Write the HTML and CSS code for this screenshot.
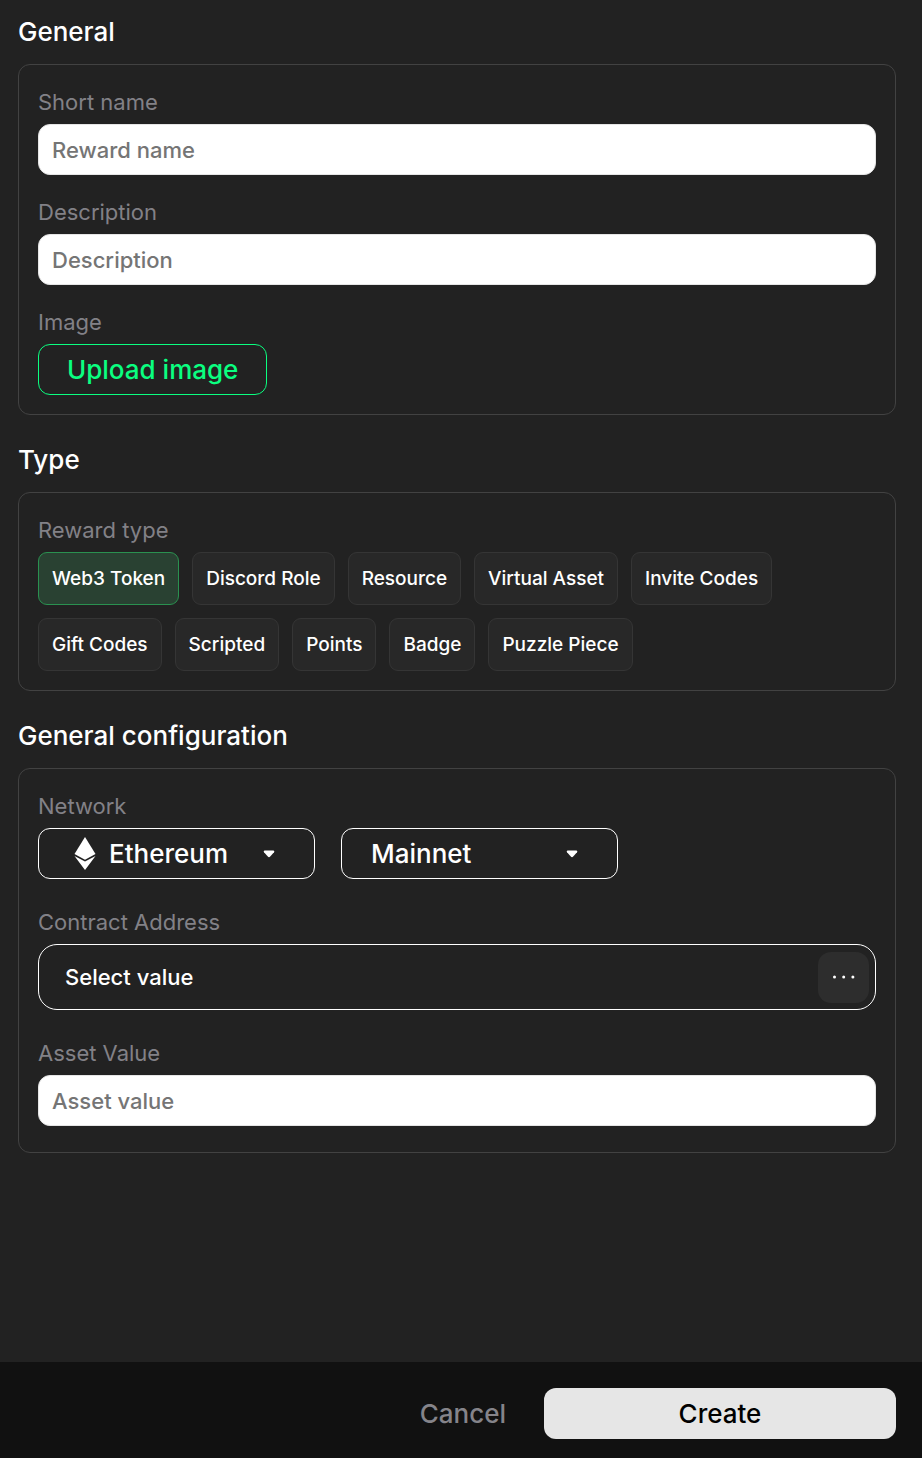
FILE: index.html
```html
<!DOCTYPE html>
<html lang="en">
<head>
    <meta charset="UTF-8">
    <meta name="viewport" content="width=device-width, initial-scale=1">
    <title>Create reward</title>
    <link rel="stylesheet" href="styles.css">
</head>
<body>
    <form class="reward-form">
        <main class="content">
            <section>
                <h2>General</h2>
                <div class="card">
                    <div class="field">
                        <label class="field-label" for="shortName">Short name</label>
                        <input class="text-input" type="text" id="shortName" placeholder="Reward name">
                    </div>
                    <div class="field">
                        <label class="field-label" for="description">Description</label>
                        <input class="text-input" type="text" id="description" placeholder="Description">
                    </div>
                    <div class="field">
                        <label class="field-label" for="uploadImage">Image</label>
                        <button class="btn btn-upload" type="button" id="uploadImage">Upload image</button>
                    </div>
                </div>
            </section>

            <section>
                <h2>Type</h2>
                <div class="card">
                    <div class="field" role="radiogroup" aria-labelledby="rewardType">
                        <span class="field-label" id="rewardType">Reward type</span>
                        <div class="chips">
                            <label class="chip"><input type="radio" name="type" checked>Web3 Token</label>
                            <label class="chip"><input type="radio" name="type">Discord Role</label>
                            <label class="chip"><input type="radio" name="type">Resource</label>
                            <label class="chip"><input type="radio" name="type">Virtual Asset</label>
                            <label class="chip"><input type="radio" name="type">Invite Codes</label>
                            <label class="chip"><input type="radio" name="type">Gift Codes</label>
                            <label class="chip"><input type="radio" name="type">Scripted</label>
                            <label class="chip"><input type="radio" name="type">Points</label>
                            <label class="chip"><input type="radio" name="type">Badge</label>
                            <label class="chip"><input type="radio" name="type">Puzzle Piece</label>
                        </div>
                    </div>
                </div>
            </section>

            <section>
                <h2>General configuration</h2>
                <div class="card card-config">
                    <div class="field">
                        <label class="field-label" for="network">Network</label>
                        <div class="selects">
                            <div class="select-box has-icon">
                                <svg class="eth" viewBox="0 0 22 33" aria-hidden="true">
                                    <path d="M11 0 L21.5 17 L11 22.8 L0.5 17 Z"/>
                                    <path d="M0.5 19 L11 24.5 L21.5 19 L11 33 Z"/>
                                </svg>
                                <select id="network">
                                    <option>Ethereum</option>
                                    <option>Polygon</option>
                                </select>
                                <svg class="caret" viewBox="0 0 12 8" aria-hidden="true">
                                    <path d="M1.5 0.5 H10.5 Q12 1 11 2.3 L7.2 6.6 Q6 7.8 4.8 6.6 L1 2.3 Q0 1 1.5 0.5 Z"/>
                                </svg>
                            </div>
                            <div class="select-box">
                                <select id="chain" aria-label="Chain">
                                    <option>Mainnet</option>
                                    <option>Testnet</option>
                                </select>
                                <svg class="caret" viewBox="0 0 12 8" aria-hidden="true">
                                    <path d="M1.5 0.5 H10.5 Q12 1 11 2.3 L7.2 6.6 Q6 7.8 4.8 6.6 L1 2.3 Q0 1 1.5 0.5 Z"/>
                                </svg>
                            </div>
                        </div>
                    </div>
                    <div class="field">
                        <label class="field-label" for="contract">Contract Address</label>
                        <div class="picker">
                            <input type="text" id="contract" placeholder="Select value">
                            <button class="btn-more" type="button" aria-label="Choose contract">
                                <svg viewBox="0 0 24 4" aria-hidden="true">
                                    <circle cx="2.5" cy="2" r="1.5"/>
                                    <circle cx="11.7" cy="2" r="1.5"/>
                                    <circle cx="20.9" cy="2" r="1.5"/>
                                </svg>
                            </button>
                        </div>
                    </div>
                    <div class="field">
                        <label class="field-label" for="assetValue">Asset Value</label>
                        <input class="text-input" type="text" id="assetValue" placeholder="Asset value">
                    </div>
                </div>
            </section>
        </main>

        <footer class="footer">
            <button class="btn btn-cancel" type="button">Cancel</button>
            <button class="btn btn-create" type="submit">Create</button>
        </footer>
    </form>
</body>
</html>
```

FILE: styles.css
```css
* {
    box-sizing: border-box;
}

body {
    margin: 0;
    background-color: #222;
    color: #fff;
    font-family: Inter, "Liberation Sans", sans-serif;
    font-weight: 500;
}

input, select, button {
    font-family: inherit;
    font-weight: 500;
}

.reward-form {
    display: flex;
    flex-direction: column;
    min-height: 100vh;
}

.content {
    flex: 1;
    display: flex;
    flex-direction: column;
    gap: 29px;
    padding: 16px 26px 28px 18px;
}

h2 {
    margin: 0 0 16px;
    font-size: 26px;
    line-height: 32px;
    font-weight: 500;
}

.card {
    display: flex;
    flex-direction: column;
    gap: 23px;
    padding: 23px 19px 19px;
    border: 1px solid #424242;
    border-radius: 12px;
}

.card-config {
    gap: 29px;
    padding-bottom: 26px;
}

.field {
    display: flex;
    flex-direction: column;
    align-items: flex-start;
    gap: 8px;
}

.field-label {
    color: #828187;
    font-size: 22px;
    line-height: 28px;
    font-weight: 400;
}

.text-input {
    width: 100%;
    height: 51px;
    padding: 0 13px;
    border: 1px solid #e5e5e5;
    border-radius: 12px;
    background-color: #fff;
    color: #111;
    font-size: 22px;
}

.text-input::placeholder {
    color: #757575;
}

/* buttons */
.btn {
    height: 51px;
    border: none;
    border-radius: 12px;
    background: none;
    font-size: 26px;
    cursor: pointer;
}

.btn-upload {
    padding: 0 28px;
    border: 1px solid #0aff80;
    color: #0aff80;
}

.btn-cancel {
    padding: 0;
    color: #85848a;
}

.btn-create {
    width: 352px;
    background-color: #e6e6e6;
    color: #000;
}

/* reward types */
.chips {
    display: flex;
    flex-wrap: wrap;
    gap: 13px;
}

.chip {
    position: relative;
    padding: 0 13px;
    border: 1px solid #353535;
    border-radius: 9px;
    background-color: #282828;
    font-size: 19px;
    line-height: 51px;
    cursor: pointer;
}

.chip:has(input:checked) {
    border-color: #2a9150;
    background-color: #294132;
}

.chip input {
    position: absolute;
    inset: 0;
    margin: 0;
    opacity: 0;
}

/* network */
.selects {
    display: flex;
    flex-wrap: wrap;
    gap: 26px;
}

.select-box {
    position: relative;
    width: 277px;
}

.select-box select {
    appearance: none;
    width: 100%;
    height: 51px;
    padding: 0 60px 0 29px;
    border: 1px solid #fff;
    border-radius: 12px;
    background-color: #222;
    color: #fff;
    font-size: 26px;
}

.select-box.has-icon select {
    padding-left: 70px;
}

.eth {
    position: absolute;
    top: 9px;
    left: 36px;
    width: 22px;
    height: 33px;
    fill: #fff;
    pointer-events: none;
}

.caret {
    position: absolute;
    top: 22px;
    right: 40px;
    width: 12px;
    height: 8px;
    fill: #fff;
    pointer-events: none;
}

/* contract address */
.picker {
    display: flex;
    align-items: center;
    width: 100%;
    height: 66px;
    padding: 0 6px 0 26px;
    border: 1px solid #fff;
    border-radius: 19px;
}

.picker input {
    flex: 1;
    min-width: 0;
    padding: 0;
    border: none;
    background: none;
    color: #fff;
    font-size: 22px;
}

.picker input::placeholder {
    color: #fff;
}

.btn-more {
    display: flex;
    align-items: center;
    justify-content: center;
    width: 51px;
    height: 51px;
    padding: 0;
    border: none;
    border-radius: 13px;
    background-color: #2d2d2d;
    cursor: pointer;
}

.btn-more svg {
    width: 24px;
    height: 4px;
    fill: #fff;
}

.footer {
    display: flex;
    justify-content: flex-end;
    gap: 38px;
    padding: 26px 26px 19px;
    background-color: #111;
}
```
